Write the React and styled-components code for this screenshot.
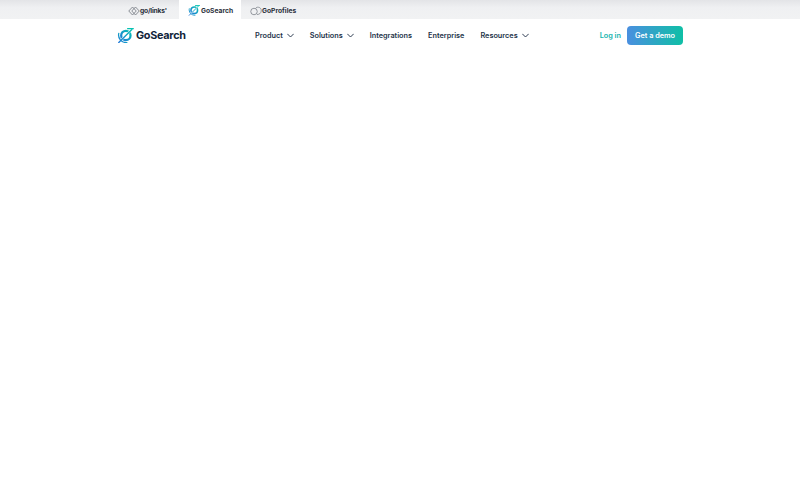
import React from "react";
import styled, { createGlobalStyle } from "styled-components";

const Global = createGlobalStyle`
  html, body { margin: 0; padding: 0; background: #fff; }
  body { font-family: "Inter", "Liberation Sans", sans-serif; }
`;
const Page = styled.div`
  width: 800px;
  height: 496px;
  background: #fff;
  overflow: hidden;
`;
const TopBar = styled.div`
  height: 19px;
  background: linear-gradient(#e3e4e7, #eff0f2 40%, #f1f2f3);
  display: flex;
  padding-left: 117px;
`;
const Tab = styled.div`
  width: ${(p) => p.$w}px;
  height: 19px;
  padding: 2px 0 0 ${(p) => p.$pad}px;
  box-sizing: border-box;
  display: flex;
  align-items: center;
  gap: ${(p) => p.$gap}px;
  background: ${(p) => (p.$active ? "#fff" : "transparent")};
  font-weight: 700;
  font-size: 6.7px;
  letter-spacing: ${(p) => p.$track || 0}px;
  color: #2a2f3a;
`;
const Nav = styled.div`
  height: 33px;
  padding: 0 117px 0 117px;
  display: flex;
  align-items: center;
`;
const Logo = styled.div`
  width: 138px;
  display: flex;
  align-items: center;
  gap: 2px;
  font-weight: 700;
  font-size: 10.8px;
  letter-spacing: -0.25px;
  color: #10243a;
`;
const Menu = styled.div`
  flex: 1;
  display: flex;
  align-items: center;
  gap: 16px;
`;
const MenuItem = styled.div`
  display: flex;
  align-items: center;
  gap: 4px;
  font-size: 7.3px;
  font-weight: 600;
  color: #24344a;
  white-space: nowrap;
`;
const Actions = styled.div`
  display: flex;
  align-items: center;
  gap: 6px;
`;
const Login = styled.span`
  font-size: 7.3px;
  font-weight: 600;
  color: #14b3ae;
`;
const Demo = styled.div`
  width: 56px;
  height: 19px;
  border-radius: 4px;
  background: linear-gradient(90deg, #4a8fe0, #0fbfa6);
  color: #fff;
  font-size: 7.3px;
  font-weight: 600;
  display: flex;
  align-items: center;
  justify-content: center;
`;

const SearchMark = ({ size, id }) => (
  <svg width={size} height={size * 0.92} viewBox="0 0 24 22" fill="none">
    <defs>
      <linearGradient id={id} x1="0" y1="1" x2="1" y2="0">
        <stop offset="0" stopColor="#1f78d8" />
        <stop offset="1" stopColor="#06c2b2" />
      </linearGradient>
    </defs>
    <circle cx="12.5" cy="10.5" r="6.6" stroke={`url(#${id})`} strokeWidth="3.2" />
    <path d="M21 2L3.5 19.5" stroke="#fff" strokeWidth="3" />
    <path d="M21 2L2.5 20.5" stroke={`url(#${id})`} strokeWidth="1.9" strokeLinecap="round" />
    <path d="M2.5 7.5C1 14 6 21 14 20.5" stroke={`url(#${id})`} strokeWidth="1.8" strokeLinecap="round" />
    <path d="M15 1H23" stroke="#06c2b2" strokeWidth="1.8" strokeLinecap="round" />
  </svg>
);
const LinksMark = () => (
  <svg width="12" height="10" viewBox="0 0 24 20" fill="none" stroke="#777c84" strokeWidth="1.7">
    <path d="M9 2L1.5 10L9 18L16.5 10Z" />
    <path d="M15 2L7.5 10L15 18L22.5 10Z" />
  </svg>
);
const ProfilesMark = () => (
  <svg width="12" height="10" viewBox="0 0 24 20" fill="none" stroke="#777c84" strokeWidth="1.5">
    <circle cx="8" cy="11" r="6.5" />
    <path d="M11 5C12 3 14.5 2 17 2.5C20.5 3 23 6 22.5 10C22 14.5 18.5 17 14 17" />
  </svg>
);
const Chevron = () => (
  <svg width="7" height="5" viewBox="0 0 7 5" fill="none" stroke="#24344a" strokeWidth="0.95">
    <path d="M0.3 0.8L3.5 4L6.7 0.8" />
  </svg>
);

export default function App() {
  return (
    <Page>
      <Global />
      <TopBar>
        <Tab $w={62} $pad={11} $gap={0} $track={-0.2}>
          <LinksMark />
          <span>go/links'</span>
        </Tab>
        <Tab $w={62} $pad={9} $gap={1} $active>
          <SearchMark size={12} id="markSmall" />
          <span>GoSearch</span>
        </Tab>
        <Tab $w={70} $pad={9} $gap={0}>
          <ProfilesMark />
          <span>GoProfiles</span>
        </Tab>
      </TopBar>
      <Nav>
        <Logo>
          <SearchMark size={17} id="markLarge" />
          <span>GoSearch</span>
        </Logo>
        <Menu>
          <MenuItem>Product <Chevron /></MenuItem>
          <MenuItem>Solutions <Chevron /></MenuItem>
          <MenuItem>Integrations</MenuItem>
          <MenuItem>Enterprise</MenuItem>
          <MenuItem>Resources <Chevron /></MenuItem>
        </Menu>
        <Actions>
          <Login>Log in</Login>
          <Demo>Get a demo</Demo>
        </Actions>
      </Nav>
    </Page>
  );
}
